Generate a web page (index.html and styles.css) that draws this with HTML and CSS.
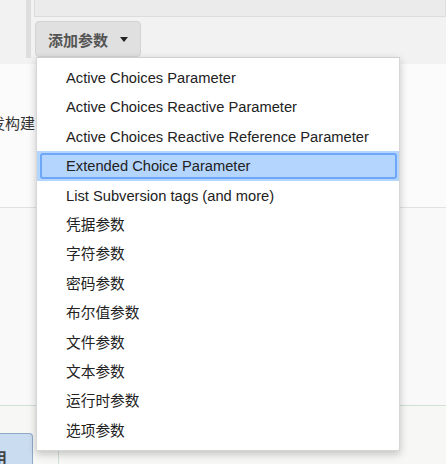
FILE: index.html
```html
<!DOCTYPE html>
<html>
<head>
<meta charset="utf-8">
<link rel="stylesheet" href="styles.css">
</head>
<body>
<div class="page">
  <section class="top">
    <div class="panel">
      <div class="inner-box"></div>
      <button class="add-btn">添加参数 <span class="caret"></span></button>
    </div>
  </section>
  <section class="middle">
    <div class="cut-text">触发构建</div>
  </section>
  <section class="lower"></section>
  <section class="bottom">
    <div class="tab">启用</div>
    <div class="col"></div>
  </section>

  <ul class="menu">
    <li>Active Choices Parameter</li>
    <li>Active Choices Reactive Parameter</li>
    <li>Active Choices Reactive Reference Parameter</li>
    <li class="active">Extended Choice Parameter</li>
    <li>List Subversion tags (and more)</li>
    <li>凭据参数</li>
    <li>字符参数</li>
    <li>密码参数</li>
    <li>布尔值参数</li>
    <li>文件参数</li>
    <li>文本参数</li>
    <li>运行时参数</li>
    <li>选项参数</li>
  </ul>
</div>
</body>
</html>
```
FILE: styles.css
```css
html, body {
  margin: 0;
  padding: 0;
}
body {
  font-family: "Liberation Sans", Arial, "Noto Sans CJK SC", sans-serif;
  font-size: 14px;
  color: #222;
  background: #fff;
}
.page {
  position: relative;
  width: 446px;
  height: 464px;
  overflow: hidden;
}
.top {
  height: 64px;
  background: #f2f2f2;
  padding-left: 26px;
  box-sizing: border-box;
}
.panel {
  height: 58px;
  border-left: 5px solid #dedede;
  padding-left: 3px;
  box-sizing: border-box;
}
.inner-box {
  height: 17px;
  background: #ebebeb;
  border: 1px solid #dcdcdc;
  border-top: 0;
  box-sizing: border-box;
}
.add-btn {
  display: flex;
  align-items: center;
  margin-top: 4px;
  margin-left: 1px;
  height: 36px;
  width: 106px;
  padding: 0 0 0 12px;
  background: #e0e0e0;
  border: 1px solid #d3d3d3;
  border-radius: 4px;
  color: #555;
  font-family: "Noto Sans CJK SC", sans-serif;
  font-size: 15px;
  font-weight: 700;
  box-sizing: border-box;
}
.caret {
  display: inline-block;
  margin-left: 12px;
  width: 0;
  height: 0;
  border-left: 4px solid transparent;
  border-right: 4px solid transparent;
  border-top: 5px solid #222;
}
.middle {
  height: 144px;
  border-bottom: 1px solid #e2e2e2;
  background: #fbfbfb;
  box-sizing: border-box;
  padding-top: 48px;
}
.cut-text {
  margin-left: -25px;
  font-family: "Noto Sans CJK SC", sans-serif;
  font-size: 15px;
  color: #333;
}
.lower {
  height: 198px;
  background: #f9f9f9;
  border-bottom: 1px solid #cfe0d4;
  box-sizing: border-box;
}
.bottom {
  height: 58px;
  background: #f7f7f5;
  display: flex;
  align-items: flex-end;
}
.tab {
  width: 33px;
  height: 31px;
  background: #cadcf0;
  border: 1px solid #8fa9c9;
  border-left: 0;
  border-bottom: 0;
  border-radius: 0 4px 0 0;
  box-sizing: border-box;
  font-family: "Noto Sans CJK SC", sans-serif;
  font-weight: 700;
  font-size: 16px;
  color: #444;
  text-indent: -25px;
  overflow: hidden;
  line-height: 46px;
  white-space: nowrap;
}
.col {
  align-self: stretch;
  margin-left: 25px;
  border-left: 1px solid #cfe0d4;
}
.menu {
  position: absolute;
  top: 57px;
  left: 36px;
  width: 364px;
  margin: 0;
  padding: 5px 0;
  list-style: none;
  background: #fff;
  border: 1px solid #d6d6d6;
  border-top-color: #cfcfcf;
  box-shadow: 0 3px 8px rgba(0,0,0,0.22);
  box-sizing: border-box;
}
.menu li {
  height: 29.4px;
  line-height: 30.4px;
  padding-left: 29px;
  font-family: "Liberation Sans", Arial, "Noto Sans CJK SC", sans-serif;
  font-size: 14.7px;
  white-space: nowrap;
  box-sizing: border-box;
}
.menu li.active {
  background: #b4d5fd;
  position: relative;
}
.menu li.active::after {
  content: "";
  position: absolute;
  left: 3px;
  right: 2px;
  top: 2px;
  bottom: 2px;
  border: 2px solid #6ea6f8;
  border-radius: 3px;
}
```
